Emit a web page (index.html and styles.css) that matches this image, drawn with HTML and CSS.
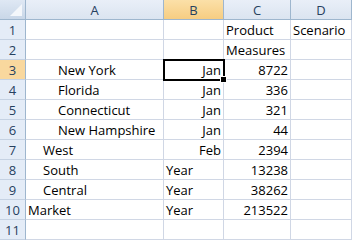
FILE: index.html
```html
<!DOCTYPE html>
<html lang="en">
<head>
    <meta charset="UTF-8">
    <title>Sheet1</title>
    <link rel="stylesheet" href="styles.css">
</head>
<body>
    <div class="sheet">
        <!-- header row -->
        <div class="hd corner"><span class="tri"></span></div>
        <div class="hd col">A</div>
        <div class="hd col active">B</div>
        <div class="hd col">C</div>
        <div class="hd col">D</div>

        <div class="hd row">1</div>
        <div class="cell"></div>
        <div class="cell"></div>
        <div class="cell">Product</div>
        <div class="cell">Scenario</div>

        <div class="hd row">2</div>
        <div class="cell"></div>
        <div class="cell"></div>
        <div class="cell">Measures</div>
        <div class="cell"></div>

        <div class="hd row active">3</div>
        <div class="cell lvl2">New York</div>
        <div class="cell num selected">Jan<span class="handle"></span></div>
        <div class="cell num">8722</div>
        <div class="cell"></div>

        <div class="hd row">4</div>
        <div class="cell lvl2">Florida</div>
        <div class="cell num">Jan</div>
        <div class="cell num">336</div>
        <div class="cell"></div>

        <div class="hd row">5</div>
        <div class="cell lvl2">Connecticut</div>
        <div class="cell num">Jan</div>
        <div class="cell num">321</div>
        <div class="cell"></div>

        <div class="hd row">6</div>
        <div class="cell lvl2">New Hampshire</div>
        <div class="cell num">Jan</div>
        <div class="cell num">44</div>
        <div class="cell"></div>

        <div class="hd row">7</div>
        <div class="cell lvl1">West</div>
        <div class="cell num">Feb</div>
        <div class="cell num">2394</div>
        <div class="cell"></div>

        <div class="hd row">8</div>
        <div class="cell lvl1">South</div>
        <div class="cell">Year</div>
        <div class="cell num">13238</div>
        <div class="cell"></div>

        <div class="hd row">9</div>
        <div class="cell lvl1">Central</div>
        <div class="cell">Year</div>
        <div class="cell num">38262</div>
        <div class="cell"></div>

        <div class="hd row">10</div>
        <div class="cell">Market</div>
        <div class="cell">Year</div>
        <div class="cell num">213522</div>
        <div class="cell"></div>

        <div class="hd row">11</div>
        <div class="cell"></div>
        <div class="cell"></div>
        <div class="cell"></div>
        <div class="cell"></div>
    </div>
</body>
</html>
```

FILE: styles.css
```css
body {
    margin: 0;
    background-color: #ffffff;
    font-family: "Open Sans", "Liberation Sans", sans-serif;
    font-size: 13px;
    color: #000000;
    overflow: hidden;
}

.sheet {
    display: grid;
    grid-template-columns: 26px 138px 60px 67px 61px;
    grid-auto-rows: 20px;
    width: 352px;
}

.cell {
    box-sizing: border-box;
    border-right: 1px solid #d0d7e5;
    border-bottom: 1px solid #d0d7e5;
    padding: 0 2px;
    display: flex;
    align-items: flex-end;
    line-height: 18px;
    white-space: nowrap;
    position: relative;
}

.num {
    justify-content: flex-end;
}

.lvl1 {
    padding-left: 17px;
}

.lvl2 {
    padding-left: 32px;
}

.hd {
    box-sizing: border-box;
    background: linear-gradient(#e9eff8, #dbe4f0);
    color: #27415f;
    display: flex;
    align-items: center;
    justify-content: center;
    line-height: 18px;
}

.col {
    border-right: 1px solid #9eb6ce;
    border-bottom: 1px solid #9eb6ce;
}

.row {
    background: #e4ecf7;
    border-right: 1px solid #9eb6ce;
    border-bottom: 1px solid #c5d2e3;
}

.hd.active {
    background: linear-gradient(#fbe0a8, #f6cd82);
}

.row.active {
    background: #f9d89e;
}

.corner {
    border-right: 1px solid #9eb6ce;
    border-bottom: 1px solid #9eb6ce;
    position: relative;
    background: linear-gradient(#dfe8f4, #c9d7e8);
}

.tri {
    position: absolute;
    right: 3px;
    bottom: 3px;
    width: 12px;
    height: 12px;
    background: #f4f7fb;
    clip-path: polygon(100% 0, 100% 100%, 0 100%);
}

.selected {
    outline: 2px solid #000000;
    outline-offset: -1px;
    z-index: 1;
}

.handle {
    position: absolute;
    right: -4px;
    bottom: -4px;
    width: 5px;
    height: 5px;
    background: #000000;
    border: 1px solid #ffffff;
}
```
